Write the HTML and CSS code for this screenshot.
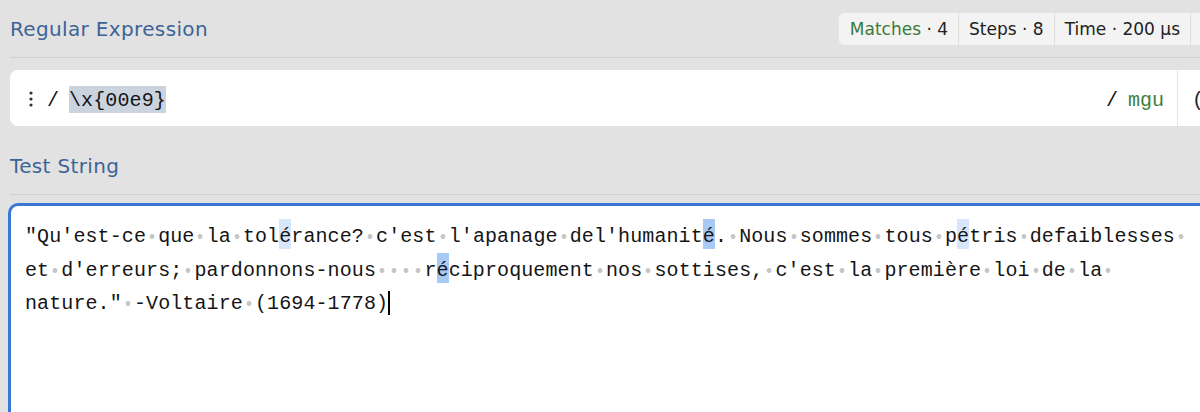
FILE: index.html
```html
<!DOCTYPE html>
<html lang="fr">
<head>
<meta charset="utf-8">
<title>Regular Expression</title>
<link rel="stylesheet" href="styles.css">
</head>
<body>
<div class="page">
  <header class="head head-top">
    <h2 class="title">Regular Expression</h2>
    <div class="stats">
      <div class="cell"><span class="green">Matches</span> · 4</div>
      <div class="cell">Steps · 8</div>
      <div class="cell">Time · 200 µs</div>
      <div class="cell cell-more"></div>
    </div>
  </header>

  <div class="regex-row">
    <div class="regex-box">
      <svg class="menu" width="6" height="20" viewBox="0 0 6 20" aria-hidden="true">
        <circle cx="3" cy="4" r="1.6" fill="#333"/>
        <circle cx="3" cy="10" r="1.6" fill="#333"/>
        <circle cx="3" cy="16" r="1.6" fill="#333"/>
      </svg>
      <span class="delim">/</span>
      <span class="expr"><span class="expr-hl">\x{00e9}</span></span>
      <span class="spacer"></span>
      <span class="delim">/</span>
      <span class="flags">mgu</span>
    </div>
    <div class="regex-side"><span class="side-glyph">(</span></div>
  </div>

  <header class="head head-test">
    <h2 class="title">Test String</h2>
  </header>

  <div class="test-box">
    <div class="line">"Qu'est-ce<span class="sp"> </span>que<span class="sp"> </span>la<span class="sp"> </span>tol<span class="m m1">é</span>rance?<span class="sp"> </span>c'est<span class="sp"> </span>l'apanage<span class="sp"> </span>del'humanit<span class="m m2">é</span>.<span class="sp"> </span>Nous<span class="sp"> </span>sommes<span class="sp"> </span>tous<span class="sp"> </span>p<span class="m m1">é</span>tris<span class="sp"> </span>defaiblesses<span class="sp"> </span></div>
    <div class="line">et<span class="sp"> </span>d'erreurs;<span class="sp"> </span>pardonnons-nous<span class="sp"> </span><span class="sp"> </span><span class="sp"> </span><span class="sp"> </span>r<span class="m m2">é</span>ciproquement<span class="sp"> </span>nos<span class="sp"> </span>sottises,<span class="sp"> </span>c'est<span class="sp"> </span>la<span class="sp"> </span>première<span class="sp"> </span>loi<span class="sp"> </span>de<span class="sp"> </span>la<span class="sp"> </span></div>
    <div class="line">nature."<span class="sp"> </span>-Voltaire<span class="sp"> </span>(1694-1778)<span class="caret"></span></div>
  </div>
</div>
</body>
</html>
```

FILE: styles.css
```css
html, body {
  margin: 0;
  padding: 0;
}

body {
  background: #e2e2e2;
  overflow: hidden;
  font-family: "DejaVu Sans", "Liberation Sans", sans-serif;
  color: #222;
}

.page {
  width: 1240px;
  padding-left: 10px;
  box-sizing: border-box;
}

.head {
  display: flex;
  align-items: center;
  border-bottom: 1px solid #d0d0d0;
  padding-bottom: 12px;
}

.head-top {
  padding-top: 13px;
}

.head-test {
  padding-top: 24px;
}

.title {
  margin: 0;
  font-size: 20px;
  letter-spacing: 0.35px;
  font-weight: normal;
  line-height: 32px;
  color: #3d6496;
}

.stats {
  margin-left: auto;
  display: flex;
  height: 32px;
  background: #f3f3f3;
  border-radius: 5px 0 0 5px;
  font-size: 17px;
  line-height: 32px;
  color: #222;
}

.cell {
  padding: 0 10px;
  border-left: 1px solid #dddddd;
  white-space: nowrap;
}

.cell:first-child {
  border-left: none;
  padding-left: 11px;
}

.cell-more {
  width: 29px;
}

.green {
  color: #3b7a3b;
}

.regex-row {
  display: flex;
  margin-top: 12px;
  height: 56px;
}

.regex-box {
  flex: 0 0 1167px;
  box-sizing: border-box;
  display: flex;
  align-items: center;
  background: #fff;
  border-radius: 8px 0 0 8px;
  padding: 5px 13px 0 18px;
  font-family: "Liberation Mono", "DejaVu Sans Mono", monospace;
  font-size: 20px;
  line-height: 24px;
  color: #151515;
}

.menu {
  margin-top: -3px;
}

.delim {
  margin-left: 13px;
}

.expr {
  margin-left: 10px;
  letter-spacing: 0.1px;
}

.expr-hl {
  background: #cbd3de;
  padding: 3px 0 1px;
}

.spacer {
  flex: 1;
}

.flags {
  margin-left: 10px;
  color: #3e803e;
}

.regex-side {
  flex: 1;
  background: #fff;
  border-left: 1px solid #e4e4e4;
  display: flex;
  align-items: center;
  padding: 5px 0 0 14px;
  font-family: "Liberation Mono", "DejaVu Sans Mono", monospace;
  font-size: 20px;
  color: #222;
}

.test-box {
  margin-top: 8px;
  margin-left: -2px;
  width: 1230px;
  min-height: 260px;
  box-sizing: border-box;
  background: #fff;
  border: 3px solid #3a78d8;
  border-radius: 10px;
  padding: 14px 14px;
  font-family: "Liberation Mono", "DejaVu Sans Mono", monospace;
  font-size: 20px;
  letter-spacing: 0.1px;
  line-height: 33.5px;
  color: #151515;
}

.line {
  white-space: pre;
}

.sp {
  background: radial-gradient(circle at center, #c6c6c6 0, #c6c6c6 2.1px, rgba(198,198,198,0) 2.8px) center / 100% 100% no-repeat;
}

.m {
  padding: 6px 0 1px;
}

.m1 {
  background: #d6e7fb;
}

.m2 {
  background: #a8c9f4;
}

.caret {
  display: inline-block;
  width: 1.5px;
  height: 24px;
  background: #000;
  vertical-align: -6px;
}
```
